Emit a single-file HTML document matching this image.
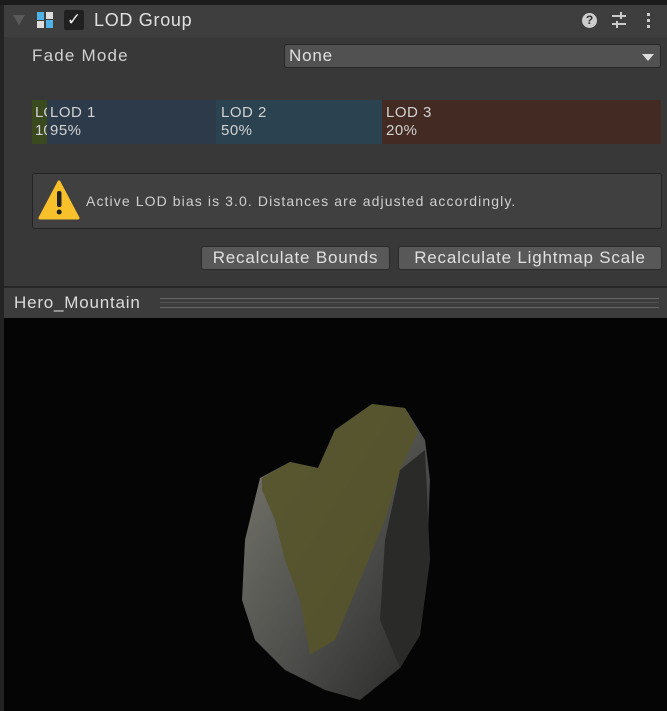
<html><head><style>
body{margin:0;width:667px;height:711px;background:#383838;font-family:"Liberation Sans",sans-serif;overflow:hidden;position:relative;color:#d2d2d2}
.a{position:absolute}
</style></head><body>
<div class="a" style="left:0;top:0;width:667px;height:5px;background:#1b1b1b"></div>
<div class="a" style="left:0;top:5px;width:4px;height:706px;background:#232323"></div>
<div class="a" style="left:4px;top:5px;width:663px;height:32px;background:#3e3e3e"></div>
<div class="a" style="left:13px;top:15px;width:0;height:0;border-left:6px solid transparent;border-right:6px solid transparent;border-top:10px solid #5a5a5a"></div>
<div class="a" style="left:37px;top:12px;width:7px;height:8px;background:#4fb3e8"></div>
<div class="a" style="left:46px;top:12px;width:7px;height:7px;background:#ddd"></div>
<div class="a" style="left:37px;top:21px;width:7px;height:7px;background:#ddd"></div>
<div class="a" style="left:46px;top:20px;width:7px;height:8px;background:#4fb3e8"></div>
<div class="a" style="left:64px;top:10px;width:20px;height:20px;background:#202020;border-radius:2px;color:#eee;font-size:17px;text-align:center;line-height:20px">✓</div>
<div class="a" style="left:94px;top:10px;font-size:18px;color:#e0e0e0;letter-spacing:0.7px">LOD Group</div>
<div class="a" style="left:582px;top:13px;width:15px;height:15px;border-radius:50%;background:#ccc;color:#333;font-size:12px;font-weight:bold;text-align:center;line-height:15px">?</div>
<div class="a" style="left:612px;top:15px;width:14px;height:2px;background:#ccc"></div>
<div class="a" style="left:612px;top:23px;width:14px;height:2px;background:#ccc"></div>
<div class="a" style="left:620px;top:12px;width:2px;height:7px;background:#ccc"></div>
<div class="a" style="left:616px;top:21px;width:2px;height:7px;background:#ccc"></div>
<div class="a" style="left:647px;top:13px;width:3px;height:3px;background:#ccc;box-shadow:0 6px #ccc,0 12px #ccc"></div>
<div class="a" style="left:32px;top:46px;font-size:17px;letter-spacing:1.2px">Fade Mode</div>
<div class="a" style="left:284px;top:44px;width:377px;height:24px;background:#515151;border:1px solid #262626;border-radius:3px;box-sizing:border-box"></div>
<div class="a" style="left:289px;top:46px;font-size:17px;color:#e0e0e0;letter-spacing:0.8px">None</div>
<div class="a" style="left:642px;top:54px;border-left:6px solid transparent;border-right:6px solid transparent;border-top:7px solid #ddd"></div>
<div class="a" style="left:32px;top:100px;width:15px;height:44px;background:#3b4a1e"></div>
<div class="a" style="left:47px;top:100px;width:169px;height:44px;background:#2c3a4a"></div>
<div class="a" style="left:216px;top:100px;width:166px;height:44px;background:#2b4350"></div>
<div class="a" style="left:382px;top:100px;width:279px;height:44px;background:#432a22"></div>
<div class="a" style="left:35px;top:104px;font-size:15px;line-height:18px;width:12px;overflow:hidden;white-space:nowrap">LOD<br>100%</div>
<div class="a" style="left:50px;top:104px;font-size:15px;line-height:18px;letter-spacing:0.5px">LOD 1<br>95%</div>
<div class="a" style="left:221px;top:104px;font-size:15px;line-height:18px;letter-spacing:0.5px">LOD 2<br>50%</div>
<div class="a" style="left:386px;top:104px;font-size:15px;line-height:18px;letter-spacing:0.5px">LOD 3<br>20%</div>
<div class="a" style="left:32px;top:173px;width:630px;height:56px;background:#404040;border:1px solid #242424;border-radius:3px;box-sizing:border-box"></div>
<svg class="a" style="left:38px;top:179px" width="42" height="42"><path d="M21 3 L40 39 L2 39 Z" fill="#f8c12c" stroke="#f8c12c" stroke-width="3" stroke-linejoin="round"/><rect x="19" y="12" width="4.5" height="16" rx="2" fill="#222"/><circle cx="21.2" cy="33" r="2.5" fill="#222"/></svg>
<div class="a" style="left:86px;top:193px;font-size:14px;color:#cfcfcf;letter-spacing:1.1px;white-space:nowrap">Active LOD bias is 3.0. Distances are adjusted accordingly.</div>
<div class="a" style="left:201px;top:246px;width:189px;height:24px;background:#585858;border:1px solid #2a2a2a;border-radius:3px;box-sizing:border-box;font-size:17px;text-align:center;line-height:22px;color:#e0e0e0;letter-spacing:0.8px;white-space:nowrap">Recalculate Bounds</div>
<div class="a" style="left:398px;top:246px;width:264px;height:24px;background:#585858;border:1px solid #2a2a2a;border-radius:3px;box-sizing:border-box;font-size:17px;text-align:center;line-height:22px;color:#e0e0e0;letter-spacing:0.8px;white-space:nowrap">Recalculate Lightmap Scale</div>
<div class="a" style="left:4px;top:286px;width:663px;height:2px;background:#262626"></div>
<div class="a" style="left:4px;top:288px;width:663px;height:30px;background:#3c3c3c"></div>
<div class="a" style="left:14px;top:293px;font-size:17px;color:#dcdcdc;letter-spacing:0.8px">Hero_Mountain</div>
<div class="a" style="left:160px;top:298px;width:499px;height:8px;border-top:1px solid #666;border-bottom:1px solid #666"><div style="margin-top:3px;height:1px;background:#555"></div></div>
<div class="a" style="left:4px;top:318px;width:663px;height:393px;background:#050505"></div>
<svg class="a" style="left:0;top:0" width="667" height="711">
<defs><linearGradient id="g" x1="0" y1="0" x2="1" y2="1"><stop offset="0" stop-color="#7a7a70"/><stop offset="0.6" stop-color="#4a4a48"/><stop offset="1" stop-color="#262626"/></linearGradient></defs>
<path d="M372 404 L405 408 L425 440 L430 480 L427 560 L420 635 L400 668 L360 700 L325 690 L285 670 L255 640 L242 600 L245 540 L260 478 L290 462 L318 468 L335 430 Z" fill="url(#g)"/>
<path d="M372 404 L405 408 L418 432 L400 470 L385 520 L360 580 L335 640 L310 655 L300 600 L285 560 L275 520 L262 490 L262 478 L290 462 L318 468 L335 430 Z" fill="#55542a" opacity="0.9"/>
<path d="M400 470 L425 450 L430 560 L420 635 L400 668 L380 620 L385 540 Z" fill="#2a2a29"/>
</svg>
</body></html>
